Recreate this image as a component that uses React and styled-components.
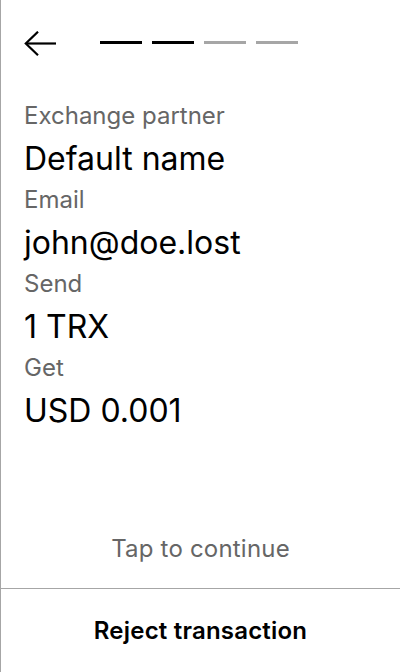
import { styled, createGlobalStyle } from "styled-components"

const GlobalStyle = createGlobalStyle`
  * {
    box-sizing: border-box;
  }

  body {
    margin: 0;
    background: #fff;
    font-family: Inter, "Noto Sans", sans-serif;
    color: #000;
  }
`

const steps = [true, true, false, false]

const details = [
  { label: 'Exchange partner', value: 'Default name' },
  { label: 'Email', value: 'john@doe.lost' },
  { label: 'Send', value: '1 TRX' },
  { label: 'Get', value: 'USD 0.001' },
]

const BackArrow = () => (
  <svg width="32" height="26" viewBox="0 0 32 26" fill="none" stroke="#000" strokeWidth="2.2">
    <path d="M32 12.5H2" />
    <path d="M14 0.7L1.8 12.5L14 24.3" />
  </svg>
)

const App = () => {
  return (
    <>
      <GlobalStyle />
      <Screen>
        <Header>
          <BackButton aria-label='back'>
            <BackArrow />
          </BackButton>
          <Progress>
            {steps.map((done, i) => (
              <Step key={i} $done={done} />
            ))}
          </Progress>
        </Header>
        <Details>
          {details.map(item => (
            <Item key={item.label}>
              <Label>{item.label}</Label>
              <Value>{item.value}</Value>
            </Item>
          ))}
        </Details>
        <Hint>Tap to continue</Hint>
        <RejectButton>Reject transaction</RejectButton>
      </Screen>
    </>
  )
}

const Screen = styled.div`
  display: flex;
  flex-direction: column;
  height: 100vh;
  border-left: 1px solid #a6a6a6;
`

const Header = styled.div`
  display: flex;
  align-items: center;
  padding: 31px 23px 0;
`

const BackButton = styled.button`
  display: flex;
  padding: 0;
  border: none;
  background: none;
  cursor: pointer;
`

const Progress = styled.div`
  display: flex;
  gap: 10px;
  margin-left: 44px;
  margin-bottom: 3px;
`

const Step = styled.span`
  width: 42px;
  height: 3px;
  background-color: ${({ $done }) => $done ? '#000' : '#a6a6a6'};
`

const Details = styled.div`
  display: flex;
  flex-direction: column;
  gap: 5px;
  padding: 43px 23px 0;
`

const Item = styled.div`
  display: flex;
  flex-direction: column;
  gap: 7px;
`

const Label = styled.span`
  font-size: 24px;
  line-height: 32px;
  color: #666;
`

const Value = styled.span`
  font-size: 32px;
  line-height: 40px;
  color: #000;
`

const Hint = styled.p`
  margin: auto 0 0;
  padding-bottom: 23px;
  text-align: center;
  font-size: 24px;
  line-height: 32px;
  letter-spacing: 0.2px;
  color: #666;
`

const RejectButton = styled.button`
  height: 84px;
  border: none;
  border-top: 1px solid #a6a6a6;
  background: none;
  font-family: Inter, "Noto Sans", sans-serif;
  font-size: 24px;
  font-weight: 600;
  line-height: 32px;
  letter-spacing: 0.2px;
  color: #000;
  cursor: pointer;
`

export default App
